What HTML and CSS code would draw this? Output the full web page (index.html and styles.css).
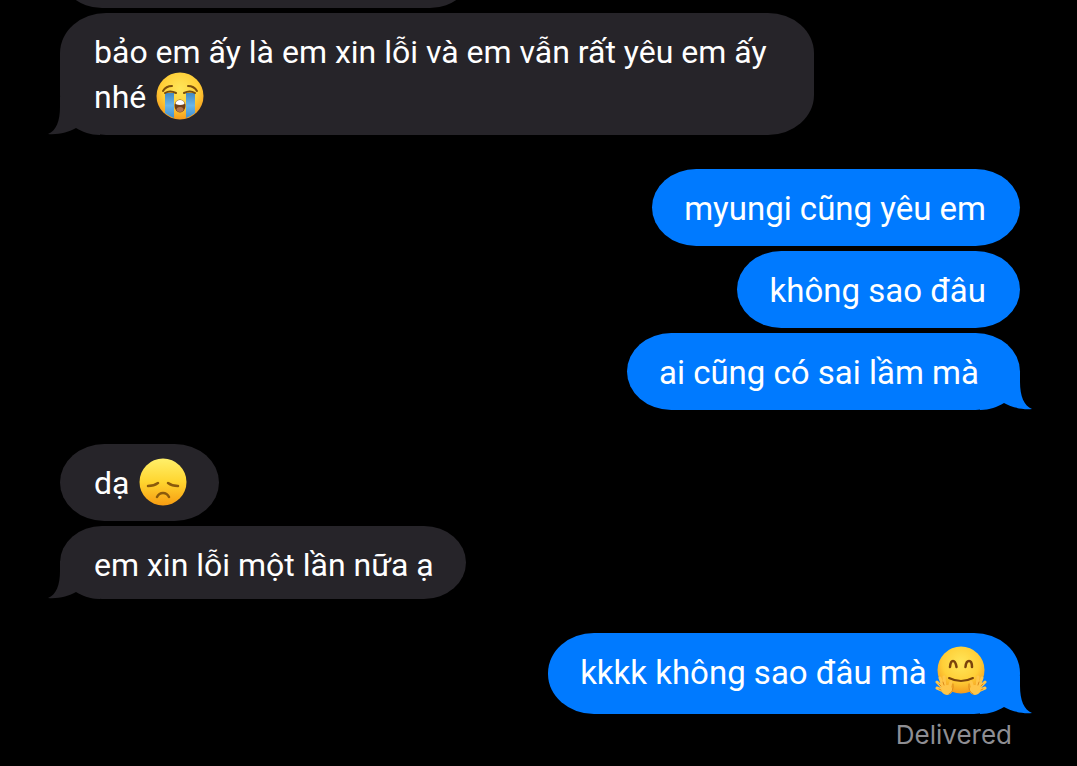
FILE: index.html
```html
<!DOCTYPE html>
<html lang="vi">
<head>
	<meta charset="utf-8">
	<meta name="viewport" content="width=device-width, initial-scale=1">
	<title>Messages</title>
	<link rel="stylesheet" href="styles.css">
</head>
<body>
	<!-- shared shapes -->
	<svg class="defs" aria-hidden="true">
		<defs>
			<radialGradient id="face" cx="50%" cy="35%" r="65%">
				<stop offset="0" stop-color="#ffe65a"/>
				<stop offset="0.6" stop-color="#ffcf38"/>
				<stop offset="1" stop-color="#f49a1c"/>
			</radialGradient>
			<linearGradient id="sad" x1="0" y1="0" x2="0" y2="1">
				<stop offset="0" stop-color="#fff06a"/>
				<stop offset="0.5" stop-color="#ffd52f"/>
				<stop offset="1" stop-color="#f79c12"/>
			</linearGradient>
			<linearGradient id="tear" x1="0" y1="0" x2="0" y2="1">
				<stop offset="0" stop-color="#4389c4"/>
				<stop offset="0.5" stop-color="#69b5e8"/>
				<stop offset="1" stop-color="#3f8fd0"/>
			</linearGradient>
		</defs>
		<symbol id="tail" viewBox="0 0 52 38">
			<path d="M12 0V10C12 24 8 34 0 37C10 38 21 35 28 31C35 35 42 38 52 38V0Z"/>
		</symbol>
	</svg>

	<main class="thread">
		<section class="group">
			<div class="bubble cut"></div>
			<div class="bubble wide">bảo em ấy là em xin lỗi và em vẫn rất yêu em ấy<br>nhé
				<svg class="emoji" viewBox="0 0 48 48" role="img" aria-label="😭">
					<circle cx="24" cy="24" r="23.5" fill="url(#face)"/>
					<path d="M9 21h9v25Q13 44 9 41Z" fill="url(#tear)"/>
					<path d="M30 21h9v20Q35 44 30 46Z" fill="url(#tear)"/>
					<g fill="none" stroke="#7a4d0c" stroke-width="2" stroke-linecap="round">
						<path d="M7 19Q10 14 16 14"/>
						<path d="M41 19Q38 14 32 14"/>
						<path d="M9 21Q14 18 20 21"/>
						<path d="M28 21Q34 18 39 21"/>
					</g>
					<ellipse cx="24" cy="34" rx="5.5" ry="6.5" fill="#714019"/>
					<path d="M19.5 32Q20 28 24 28Q28 28 28.5 32Q24 34 19.5 32Z" fill="#fff"/>
					<ellipse cx="24" cy="37.5" rx="3.5" ry="2.5" fill="#b5764f"/>
				</svg>
				<svg class="tail"><use href="#tail"/></svg>
			</div>
		</section>

		<section class="group sent">
			<div class="bubble">myungi cũng yêu em</div>
			<div class="bubble">không sao đâu</div>
			<div class="bubble last">ai cũng có sai lầm mà
				<svg class="tail"><use href="#tail"/></svg>
			</div>
		</section>

		<section class="group">
			<div class="bubble">dạ
				<svg class="emoji" viewBox="0 0 48 48" role="img" aria-label="😞">
					<circle cx="24" cy="24" r="23.5" fill="url(#sad)"/>
					<g fill="none" stroke="#8a5a0c" stroke-width="2.5" stroke-linecap="round">
						<path d="M9 28Q15 28 19 25"/>
						<path d="M39 28Q33 28 29 25"/>
						<path d="M18 39Q20 35 24 35Q28 35 30 39"/>
					</g>
				</svg>
			</div>
			<div class="bubble short">em xin lỗi một lần nữa ạ
				<svg class="tail"><use href="#tail"/></svg>
			</div>
		</section>

		<section class="group sent">
			<div class="bubble tall last">kkkk không sao đâu mà
				<svg class="emoji hug" viewBox="0 0 52 50" role="img" aria-label="🤗">
					<circle cx="26" cy="24" r="23.5" fill="url(#face)"/>
					<g fill="none" stroke="#7a430c" stroke-linecap="round">
						<path d="M15 21Q15.5 15 18 15T21.5 21" stroke-width="2.5"/>
						<path d="M30.5 21Q31 15 34 15T37 21" stroke-width="2.5"/>
						<path d="M14 32Q26 38 38 32" stroke-width="2"/>
					</g>
					<g id="hand" fill="none" stroke="#ffc64a" stroke-width="3" stroke-linecap="round">
						<path d="M9 43L2 36M9 43L5 32M10 42L9 31M9 45L2 42M14 42L16 36"/>
						<ellipse cx="12" cy="44" rx="4" ry="3.5" fill="#ffc64a"/>
						<path d="M6 40L4 38M9 39L8 36M6 44L4 43M14 48Q19 46 18 38" stroke="#dc891c" stroke-width="1"/>
					</g>
					<use href="#hand" transform="matrix(-1 0 0 1 52 0)"/>
				</svg>
				<svg class="tail"><use href="#tail"/></svg>
			</div>
			<p class="status">Delivered</p>
		</section>
	</main>
</body>
</html>
```
FILE: styles.css
```css
* {
	box-sizing: border-box;
	margin: 0;
	padding: 0;
}

body {
	background-color: #000;
	font-family: Roboto, "Liberation Sans", sans-serif;
}

.defs {
	position: absolute;
	width: 0;
	height: 0;
}

/* newest message stays at the bottom */
.thread {
	display: flex;
	flex-direction: column;
	justify-content: flex-end;
	gap: 34px;
	height: 100vh;
	padding: 0 57px 16px 60px;
	overflow: hidden;
}

.group {
	display: flex;
	flex-direction: column;
	align-items: flex-start;
	gap: 5px;
}

.sent {
	align-items: flex-end;
}

.bubble {
	position: relative;
	isolation: isolate;
	flex: none;
	min-height: 73px;
	padding: 17px 32px 15px 34px;
	border-radius: 46px / 40px;
	background-color: #262429;
	color: #fff;
	fill: #262429;
	font-size: 32px;
	line-height: 45px;
}

.sent .bubble {
	padding-right: 34px;
	padding-left: 32px;
	background-color: #007aff;
	fill: #007aff;
	font-size: 33px;
}

.sent .last {
	padding-right: 41px;
}

.cut {
	width: 412px;
}

.bubble.wide {
	padding-right: 47px;
}

.bubble.short {
	padding-bottom: 11px;
}

.bubble.tall {
	padding-right: 33px;
	padding-bottom: 19px;
}

.emoji {
	width: 48px;
	height: 48px;
	margin: -8px 0 -8px 2px;
	vertical-align: -4px;
}

.hug {
	width: 52px;
	height: 50px;
	margin-left: 0;
}

/* sits under the text, over the bubble */
.tail {
	position: absolute;
	z-index: -1;
	left: -12px;
	bottom: 0;
	width: 52px;
	height: 38px;
}

.sent .tail {
	left: auto;
	right: -12px;
	transform: scaleX(-1);
}

.status {
	padding-right: 8px;
	color: #8e8e93;
	font-family: Inter, "Liberation Sans", sans-serif;
	font-size: 26px;
	line-height: 31px;
}
```
